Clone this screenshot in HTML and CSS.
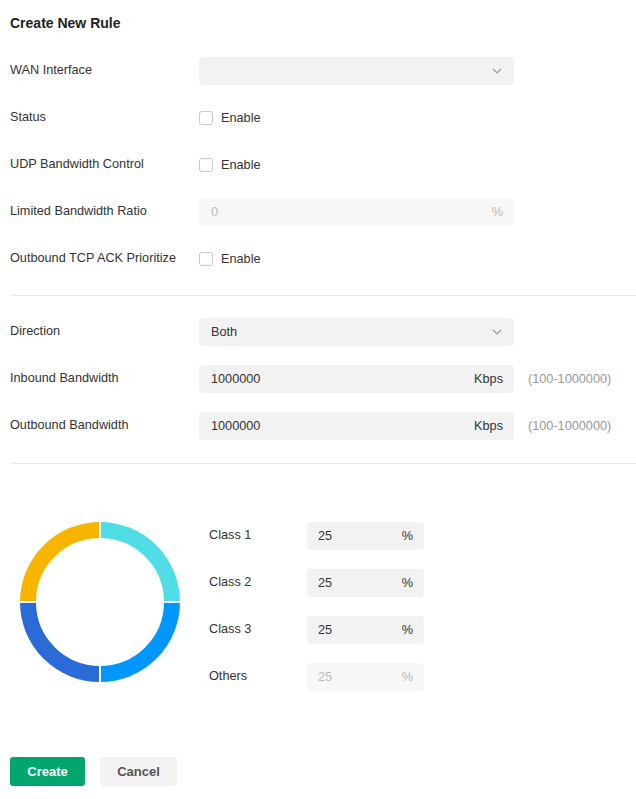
FILE: index.html
```html
<!DOCTYPE html>
<html>
<head>
<meta charset="utf-8">
<link rel="stylesheet" href="styles.css">
</head>
<body>
<div class="page">
  <h1 class="title">Create New Rule</h1>

  <div class="form">
    <div class="row">
      <div class="label">WAN Interface</div>
      <div class="field select"><span class="value"></span><span class="chev"><svg width="10" height="6" viewBox="0 0 10 6"><path d="M1 1 L5 5 L9 1" fill="none" stroke="#999" stroke-width="1.2"/></svg></span></div>
    </div>
    <div class="row">
      <div class="label">Status</div>
      <label class="check"><span class="box"></span><span>Enable</span></label>
    </div>
    <div class="row">
      <div class="label">UDP Bandwidth Control</div>
      <label class="check"><span class="box"></span><span>Enable</span></label>
    </div>
    <div class="row">
      <div class="label">Limited Bandwidth Ratio</div>
      <div class="field disabled"><span class="value">0</span><span class="unit">%</span></div>
    </div>
    <div class="row">
      <div class="label">Outbound TCP ACK Prioritize</div>
      <label class="check"><span class="box"></span><span>Enable</span></label>
    </div>
  </div>

  <div class="divider"></div>

  <div class="form">
    <div class="row">
      <div class="label">Direction</div>
      <div class="field select"><span class="value">Both</span><span class="chev"><svg width="10" height="6" viewBox="0 0 10 6"><path d="M1 1 L5 5 L9 1" fill="none" stroke="#999" stroke-width="1.2"/></svg></span></div>
    </div>
    <div class="row">
      <div class="label">Inbound Bandwidth</div>
      <div class="field"><span class="value">1000000</span><span class="unit">Kbps</span></div>
      <div class="hint">(100-1000000)</div>
    </div>
    <div class="row">
      <div class="label">Outbound Bandwidth</div>
      <div class="field"><span class="value">1000000</span><span class="unit">Kbps</span></div>
      <div class="hint">(100-1000000)</div>
    </div>
  </div>

  <div class="divider lower"></div>

  <div class="classes">
    <svg class="donut" width="160" height="160" viewBox="0 0 160 160">
      <path d="M80 8 A72 72 0 0 1 152 80" fill="none" stroke="#50dde6" stroke-width="16"/>
      <path d="M152 80 A72 72 0 0 1 80 152" fill="none" stroke="#0096ff" stroke-width="16"/>
      <path d="M80 152 A72 72 0 0 1 8 80" fill="none" stroke="#2b6bd8" stroke-width="16"/>
      <path d="M8 80 A72 72 0 0 1 80 8" fill="none" stroke="#f8b500" stroke-width="16"/>
      <rect x="79" y="0" width="2" height="160" fill="#fff"/>
      <rect x="0" y="79" width="160" height="2" fill="#fff"/>
    </svg>
    <div class="class-list">
      <div class="crow"><div class="clabel">Class 1</div><div class="field small"><span class="value">25</span><span class="unit">%</span></div></div>
      <div class="crow"><div class="clabel">Class 2</div><div class="field small"><span class="value">25</span><span class="unit">%</span></div></div>
      <div class="crow"><div class="clabel">Class 3</div><div class="field small"><span class="value">25</span><span class="unit">%</span></div></div>
      <div class="crow"><div class="clabel">Others</div><div class="field small disabled"><span class="value">25</span><span class="unit">%</span></div></div>
    </div>
  </div>

  <div class="actions">
    <button class="btn primary">Create</button>
    <button class="btn secondary">Cancel</button>
  </div>
</div>
</body>
</html>
```

FILE: styles.css
```css
* { box-sizing: border-box; }
html, body { margin: 0; padding: 0; background: #fff; }
body {
  font-family: "Liberation Sans", Arial, sans-serif;
  font-size: 12.7px;
  color: #333;
}
.page { padding-left: 10px; width: 636px; }
.title {
  margin: 0;
  padding-top: 14px;
  font-size: 14px;
  line-height: 18px;
  font-weight: bold;
  color: #222;
}
.form {
  display: flex;
  flex-direction: column;
  gap: 19px;
  margin-top: 25px;
}
.divider + .form { margin-top: 22px; }
.row {
  display: flex;
  align-items: center;
  height: 28px;
}
.label { width: 189px; flex: none; color: #333; padding-bottom: 2px; }
.field {
  width: 315px;
  height: 28px;
  background: #f2f2f2;
  border-radius: 4px;
  display: flex;
  align-items: center;
  justify-content: space-between;
  padding: 0 11px 0 12px;
  color: #333;
}
.field.disabled { background: #f7f7f7; color: #bbb; }
.select .chev { display: flex; align-items: center; padding-right: 1px; }
.unit { color: inherit; }
.hint { margin-left: 14px; color: #999; }
.check { display: flex; align-items: center; gap: 8px; }
.box {
  width: 14px;
  height: 14px;
  border: 1px solid #c8c8c8;
  border-radius: 3px;
  background: #fff;
}
.divider {
  height: 1px;
  background: #e8e8e8;
  margin-top: 22px;
}
.divider.lower { margin-top: 23px; }
.classes {
  display: flex;
  align-items: flex-start;
  padding-top: 58px;
}
.donut { margin-left: 10px; margin-right: 29px; flex: none; }
.class-list { display: flex; flex-direction: column; gap: 19px; }
.crow { display: flex; align-items: center; height: 28px; }
.clabel { width: 98px; padding-bottom: 2px; }
.field.small { width: 117px; padding: 0 11px 0 11px; }
.actions {
  display: flex;
  gap: 15px;
  margin-top: 66px;
}
.btn {
  height: 29px;
  border: none;
  border-radius: 3px;
  font-family: "Liberation Sans", Arial, sans-serif;
  font-size: 13px;
  font-weight: bold;
  padding: 0;
}
.btn.primary { width: 75px; background: #00a66e; color: #fff; }
.btn.secondary { width: 77px; background: #f2f2f2; color: #555; }
```
